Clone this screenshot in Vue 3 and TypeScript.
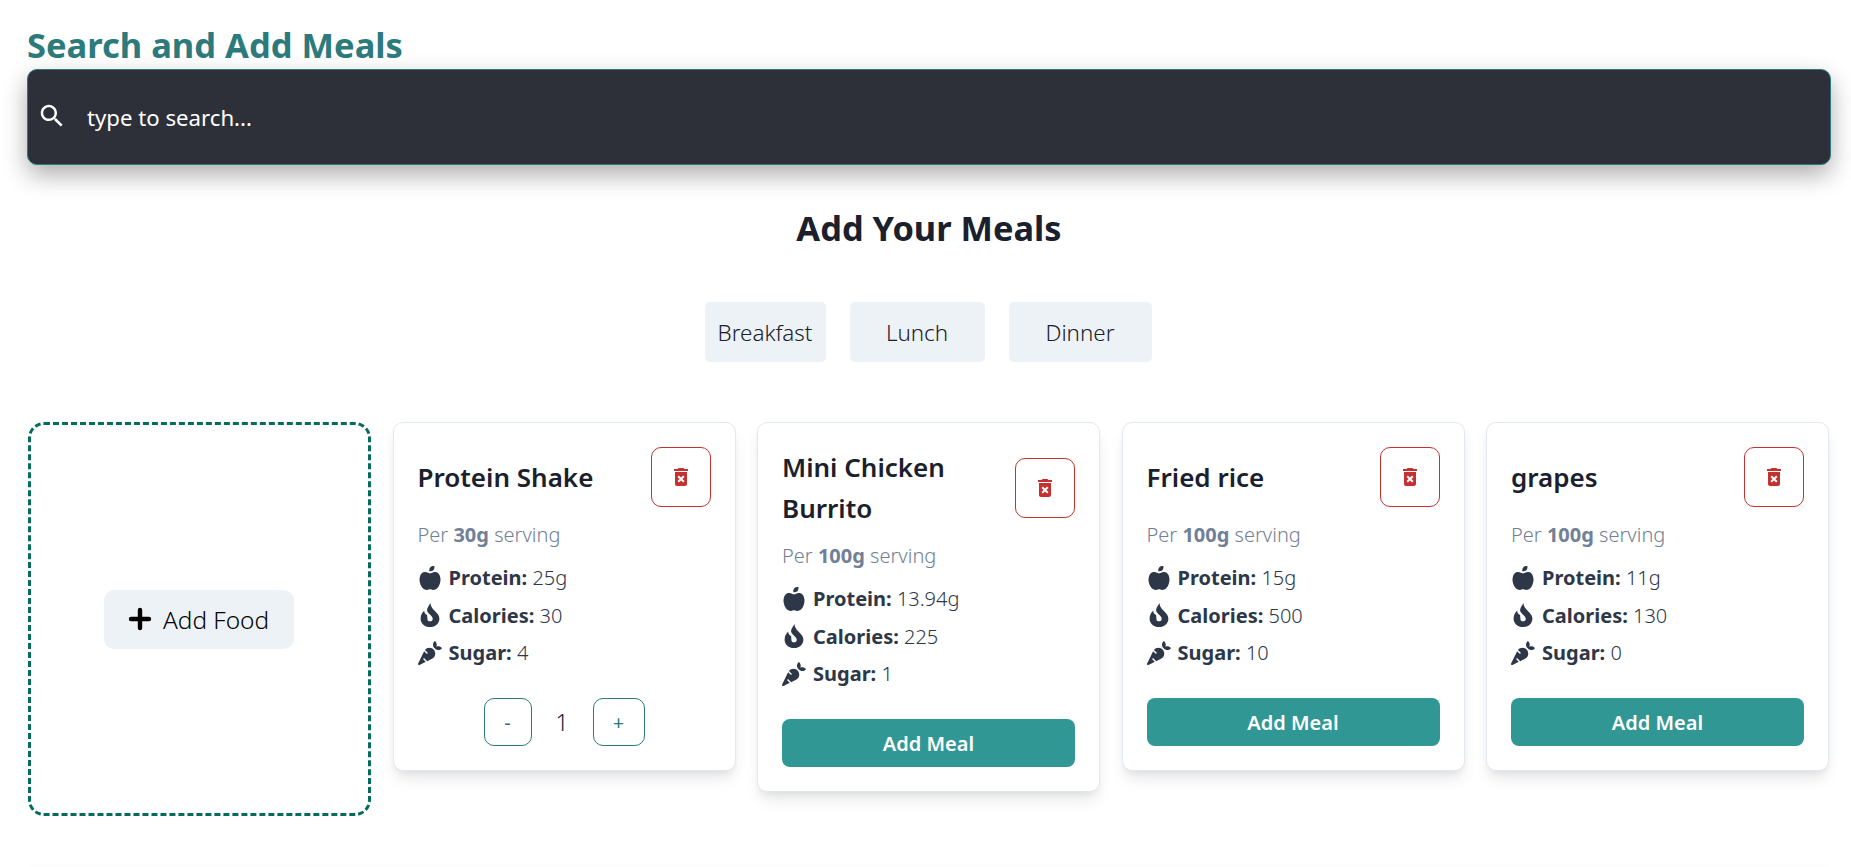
<template>
  <div class="page">
    <h2 class="page-title">Search and Add Meals</h2>
    <div class="search">
      <svg class="search-icon" viewBox="0 0 24 24"><path d="M15.5 14h-.79l-.28-.27C15.41 12.59 16 11.11 16 9.5 16 5.91 13.09 3 9.5 3S3 5.91 3 9.5 5.91 16 9.5 16c1.61 0 3.09-.59 4.23-1.57l.27.28v.79l5 4.99L20.49 19l-4.99-5zm-6 0C7.01 14 5 11.99 5 9.5S7.01 5 9.5 5 14 7.01 14 9.5 11.99 14 9.5 14z" /></svg>
      <input class="search-input" type="text" placeholder="type to search..." />
    </div>

    <h2 class="meals-title">Add Your Meals</h2>
    <div class="tabs">
      <button v-for="tab in tabs" :key="tab.name" class="tab" :class="tab.cls">{{ tab.name }}</button>
    </div>

    <div class="cards">
      <div class="add-box">
        <button class="add-food">
          <svg class="plus" viewBox="0 0 24 24"><path d="M12 3v18M3 12h18" /></svg>
          Add Food
        </button>
      </div>

      <div v-for="food in foods" :key="food.name" class="card">
        <div class="card-head">
          <h3 class="card-title">{{ food.name }}</h3>
          <button class="delete">
            <svg viewBox="0 0 24 24"><path d="M6 19c0 1.1.9 2 2 2h8c1.1 0 2-.9 2-2V7H6v12zm2.46-7.12l1.41-1.41L12 12.59l2.12-2.12 1.41 1.41L13.41 14l2.12 2.12-1.41 1.41L12 15.41l-2.12 2.12-1.41-1.41L10.59 14l-2.13-2.12zM15.5 4l-1-1h-5l-1 1H5v2h14V4z" /></svg>
          </button>
        </div>
        <p class="serving">Per <b>{{ food.serving }}</b> serving</p>
        <div class="stat">
          <svg class="stat-icon" viewBox="0 0 448 512"><path d="M350.85 129c25.97 4.67 47.27 18.67 63.92 42 14.65 20.67 24.64 46.67 29.96 78 4.67 28.67 4.32 57.33-1 86-7.99 47.33-23.97 87-47.94 119-28.64 38.67-64.59 58-107.87 58-10.66 0-22.3-3.33-34.96-10-8.66-5.33-18.31-8-28.97-8s-20.3 2.67-28.97 8c-12.66 6.67-24.3 10-34.96 10-43.28 0-79.23-19.33-107.87-58-23.97-32-39.95-71.67-47.94-119-5.32-28.67-5.67-57.33-1-86 5.32-31.33 15.31-57.33 29.96-78 16.65-23.33 37.95-37.33 63.92-42 15.98-2.67 37.95-.33 65.92 7 23.97 6.67 44.28 14.67 60.93 24 16.65-9.33 36.96-17.33 60.93-24 27.98-7.33 49.96-9.67 65.92-7zm-54.94-41c-9.32 8.67-21.65 15-36.96 19-10.66 3.33-22.3 5-34.96 5l-14.98-1c-1.33-9.33-1.33-20 0-32 2.67-24 10.32-42.33 22.97-55 9.32-8.67 21.65-15 36.96-19 10.66-3.33 22.3-5 34.96-5l14.98 1 1 15c0 12.67-1.67 24.33-4.99 34.96-3.99 15.3-10.31 27.64-18.98 36.96z" /></svg>
          <span><b>Protein:</b> {{ food.protein }}</span>
        </div>
        <div class="stat">
          <svg class="stat-icon" viewBox="0 0 18 23"><path d="M9.5 0C9.5 3 11 5 13.5 7.5 16.5 10.5 18 12.5 18 15 18 19.5 14 23 9 23 4 23 0 19.5 0 15 0 11.5 1.5 9 3.5 7.5 3.5 9.5 4.4 10.8 6.2 11.4 6.4 12.6 6.5 14 6.5 15 6.5 16.6 7.5 17.6 9 17.6 10.5 17.6 11.6 16.6 11.6 15 11.6 12.8 7.6 10.6 6.4 8 5.4 5.4 8.5 2 9.5 0Z" /></svg>
          <span><b>Calories:</b> {{ food.calories }}</span>
        </div>
        <div class="stat">
          <svg class="stat-icon" viewBox="0 0 512 512"><path d="M298.2 156.6c-52.7-25.7-114.5-10.5-150.2 32.8l55.2 55.2c6.3 6.3 6.3 16.4 0 22.6-3.1 3.1-7.2 4.7-11.3 4.7s-8.2-1.6-11.3-4.7L130.4 217 2.3 479.7c-2.9 6-3.1 13.3 0 19.7 5.4 11.1 18.9 15.7 30 10.3l133.6-65.2-49.2-49.2c-6.2-6.2-6.2-16.4 0-22.6 6.3-6.2 16.4-6.2 22.6 0l57 57 102-49.8c24-11.7 44.5-31.3 57.1-57.1 30.1-61.7 4.5-136.1-57.2-166.2zm92.1-34.9C409.8 81 399.7 32.9 360 0c-50.3 41.7-52.5 107.5-7.9 151.9l8 8c44.4 44.6 110.3 42.4 151.9-7.9-32.9-39.7-81-49.8-121.7-30.3z" /></svg>
          <span><b>Sugar:</b> {{ food.sugar }}</span>
        </div>
        <div v-if="food.qty" class="qty">
          <button class="qty-btn minus">-</button>
          <span class="qty-num">{{ food.qty }}</span>
          <button class="qty-btn">+</button>
        </div>
        <button v-else class="add-meal">Add Meal</button>
      </div>
    </div>

    <div class="next-section"></div>
  </div>
</template>

<script setup lang="ts">
interface Food {
  name: string
  serving: string
  protein: string
  calories: number
  sugar: number
  qty?: number
}

const tabs = [
  { name: 'Breakfast', cls: 'tab-b' },
  { name: 'Lunch', cls: 'tab-l' },
  { name: 'Dinner', cls: 'tab-d' },
]

const foods: Food[] = [
  { name: 'Protein Shake', serving: '30g', protein: '25g', calories: 30, sugar: 4, qty: 1 },
  { name: 'Mini Chicken Burrito', serving: '100g', protein: '13.94g', calories: 225, sugar: 1 },
  { name: 'Fried rice', serving: '100g', protein: '15g', calories: 500, sugar: 10 },
  { name: 'grapes', serving: '100g', protein: '11g', calories: 130, sugar: 0 },
]
</script>

<style>
html,
body {
  background: #fff;
  overflow: hidden;
}
</style>

<style scoped>
.page {
  height: 867px;
  box-sizing: border-box;
  padding: 22px 20px 0 27px;
  font-family: "Noto Sans", "Open Sans", sans-serif;
  color: #2d3748;
  overflow: hidden;
}
.page-title {
  margin: 0;
  font-size: 34.5px;
  line-height: 46px;
  font-weight: 700;
  color: #2c7a7b;
}
.search {
  height: 96px;
  margin-top: 1px;
  box-sizing: border-box;
  display: flex;
  align-items: center;
  background: #2d3039;
  border: 1px solid #2c7a7b;
  border-radius: 10px;
  box-shadow: 0 10px 25px rgba(0, 0, 0, 0.32);
  padding-left: 9px;
}
.search-icon {
  width: 30px;
  height: 30px;
  fill: #fff;
  margin-top: -3px;
}
.search-input {
  flex: 1;
  margin-left: 20px;
  background: transparent;
  border: none;
  outline: none;
  padding: 0;
  color: #fff;
  font: inherit;
  font-size: 22.2px;
}
.search-input::placeholder {
  color: #fff;
  opacity: 1;
}
.meals-title {
  margin: 40px 0 0;
  text-align: center;
  font-size: 34.4px;
  line-height: 46px;
  font-weight: 700;
  color: #1a202c;
}
.tabs {
  display: flex;
  justify-content: center;
  gap: 24px;
  margin-top: 51px;
  padding-right: 2px;
}
.tab {
  height: 60px;
  border: none;
  border-radius: 5px;
  background: #edf2f7;
  color: #1a202c;
  font: inherit;
  font-size: 22.4px;
  font-weight: 300;
  padding: 0;
}
.tab-b { width: 121px; }
.tab-l { width: 135px; }
.tab-d { width: 143px; }
.cards {
  display: flex;
  align-items: flex-start;
  gap: 21.5px;
  margin: 60px 0 0 1px;
}
.add-box {
  width: 343px;
  height: 394px;
  flex: none;
  box-sizing: border-box;
  display: flex;
  align-items: center;
  justify-content: center;
  border: 3px dashed #046c5e;
  border-radius: 16px;
}
.add-food {
  width: 190px;
  height: 59px;
  display: flex;
  align-items: center;
  justify-content: center;
  gap: 11px;
  border: none;
  border-radius: 10px;
  background: #edf2f7;
  color: #000;
  font: inherit;
  font-size: 24.4px;
  font-weight: 300;
  margin-left: -2px;
}
.plus {
  width: 24px;
  height: 24px;
  fill: none;
  stroke: #000;
  stroke-width: 4.4;
  stroke-linecap: round;
}
.card {
  width: 343px;
  flex: none;
  box-sizing: border-box;
  padding: 24px;
  background: #fff;
  border: 1px solid #e2e8f0;
  border-radius: 10px;
  box-shadow: 0 10px 15px -3px rgba(0, 0, 0, 0.1), 0 4px 6px -2px rgba(0, 0, 0, 0.05);
}
.card-head {
  display: flex;
  align-items: center;
  justify-content: space-between;
}
.card-title {
  margin: 0;
  width: 195px;
  font-size: 26px;
  line-height: 40.5px;
  font-weight: 600;
  color: #1a202c;
}
.delete {
  width: 60px;
  height: 60px;
  display: flex;
  align-items: center;
  justify-content: center;
  padding: 0;
  background: #fff;
  border: 1px solid #c53030;
  border-radius: 10px;
}
.delete svg {
  width: 24px;
  height: 24px;
  fill: #c53030;
}
.serving {
  margin: 12px 0 8px;
  font-size: 20px;
  font-weight: 300;
  line-height: 32px;
  color: #718096;
}
.serving b {
  font-weight: 700;
}
.stat {
  display: flex;
  align-items: center;
  gap: 7px;
  font-size: 20px;
  font-weight: 300;
  line-height: 37.5px;
}
.stat b {
  font-weight: 700;
}
.stat-icon {
  width: 24px;
  height: 24px;
  fill: #2d3748;
}
.qty {
  display: flex;
  align-items: center;
  justify-content: center;
  margin-top: 26.5px;
}
.qty-btn {
  width: 52px;
  height: 48px;
  padding: 0;
  background: #fff;
  border: 1px solid #2c7a7b;
  border-radius: 10px;
  color: #2c7a7b;
  font: inherit;
  font-size: 20px;
}
.qty-btn.minus {
  width: 48px;
}
.qty-num {
  width: 61px;
  text-align: center;
  font-size: 23px;
  font-weight: 300;
  color: #1a202c;
}
.add-meal {
  display: block;
  width: 100%;
  height: 48px;
  margin-top: 26.5px;
  border: none;
  border-radius: 8px;
  background: #319795;
  color: #fff;
  font: inherit;
  font-size: 20px;
  font-weight: 600;
}
.next-section {
  height: 200px;
  margin: 55px 0 0 1px;
  background: #fff;
  border-radius: 8px;
  box-shadow: 0 0 8px rgba(0, 0, 0, 0.08);
}
</style>
